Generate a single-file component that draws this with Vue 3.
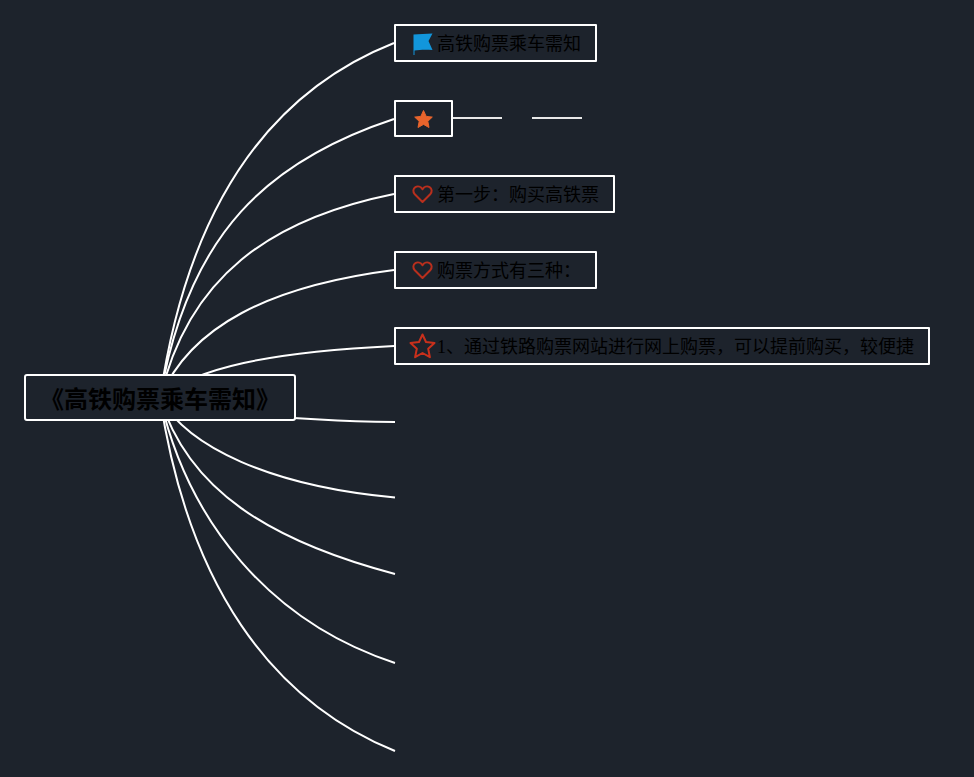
<script setup>
const links = [
  'M160 398 C188 205 270 92 394 43',
  'M160 398 C188 232 270 160 394 119',
  'M160 398 C188 277 270 219 394 194',
  'M160 398 C190 326 270 286 394 270',
  'M160 398 C195 368 270 352 394 346',
  'M160 398 Q240 420 395 422',
  'M160 398 C188 447 270 486 395 497.5',
  'M160 398 C188 490 270 541 395 574',
  'M160 398 C188 522 270 622 395 663',
  'M160 398 C188 584 270 700 395 751'
]
const nodes = [
  { text: '高铁购票乘车需知', icon: 'flag', x: 394, y: 24, w: 203, h: 38 },
  { text: '', icon: 'star', x: 394, y: 100, w: 59, h: 37 },
  { text: '第一步：购买高铁票', icon: 'heart', x: 394, y: 175, w: 221, h: 38 },
  { text: '购票方式有三种：', icon: 'heart', x: 394, y: 251, w: 203, h: 38 },
  { text: '1、通过铁路购票网站进行网上购票，可以提前购买，较便捷', icon: 'outline', x: 394, y: 327, w: 536, h: 38 }
]
</script>

<template>
  <div class="canvas">
    <svg class="links" width="974" height="777" viewBox="0 0 974 777">
      <path v-for="d in links" :key="d" :d="d" class="link" />
      <path d="M453 118H502M532 118H582" class="dash" />
    </svg>
    <div class="root">《高铁购票乘车需知》</div>
    <div
      v-for="n in nodes"
      :key="n.x + '-' + n.y"
      class="node"
      :style="{ left: n.x + 'px', top: n.y + 'px', width: n.w + 'px', height: n.h + 'px' }"
    >
      <svg v-if="n.icon === 'flag'" class="icon" width="22" height="24" viewBox="0 0 22 24">
        <path d="M1.5 3.5C7 3 14 3 20.5 2.5L16.5 10L20.5 19C15 18.5 8 18.5 2.5 19.5V24H1.5Z" fill="#1296db" />
      </svg>
      <svg v-else-if="n.icon === 'star'" class="icon" width="22" height="22" viewBox="0 0 22 22">
        <path d="M11.5 2.5L14.2 8.4L20.3 9.1L15.8 13.3L17 19.5L11.5 16.4L6 19.5L7.2 13.3L2.7 9.1L8.8 8.4Z" fill="#e8642c" stroke="#e8642c" stroke-linejoin="round" />
      </svg>
      <svg v-else-if="n.icon === 'heart'" class="icon" width="22" height="22" viewBox="0 0 22 22">
        <path d="M10.5 19L2.8 11.2C0.6 8.8 1 5.5 3.4 4.1C5.8 2.8 8.8 3.6 10.5 6.3C12.2 3.6 15.2 2.8 17.6 4.1C20 5.5 20.4 8.8 18.2 11.2Z" fill="none" stroke="#b92f1d" stroke-width="2" stroke-linejoin="round" />
      </svg>
      <svg v-else class="icon wide" width="27" height="27" viewBox="0 0 27 27">
        <path d="M13.5 1.5L17 9L25.5 10L19.2 15.8L20.9 24.2L13.5 20L6.1 24.2L7.8 15.8L1.5 10L10 9Z" fill="none" stroke="#c9301c" stroke-width="2" stroke-linejoin="round" />
      </svg>
      <span class="label">{{ n.text }}</span>
    </div>
  </div>
</template>

<style>
html, body {
  background: #1d232c;
}
</style>

<style scoped>
.canvas {
  position: relative;
  width: 974px;
  height: 777px;
  overflow: hidden;
  background: #1d232c;
  font-family: "Liberation Serif", "Noto Sans CJK SC", sans-serif;
  color: #000;
}
.links {
  position: absolute;
  left: 0;
  top: 0;
}
.link {
  fill: none;
  stroke: #fff;
  stroke-width: 2;
}
.dash {
  fill: none;
  stroke: #e8e8e8;
  stroke-width: 2;
}
.root {
  position: absolute;
  left: 24px;
  top: 374px;
  width: 272px;
  height: 47px;
  box-sizing: border-box;
  border: 2px solid #fff;
  border-radius: 3px;
  background: #1d232c;
  display: flex;
  align-items: center;
  justify-content: center;
  font-size: 24px;
  font-weight: 700;
  white-space: nowrap;
}
.node {
  position: absolute;
  box-sizing: border-box;
  border: 2px solid #fff;
  border-radius: 1px;
  background: #1d232c;
  display: flex;
  align-items: center;
  padding-left: 16px;
  font-size: 18px;
  white-space: nowrap;
}
.icon {
  flex: none;
  margin-right: 3px;
}
.icon.wide {
  margin-left: -3px;
  margin-right: 1px;
}
.label {
  line-height: 1;
  padding-top: 2px;
}
</style>
